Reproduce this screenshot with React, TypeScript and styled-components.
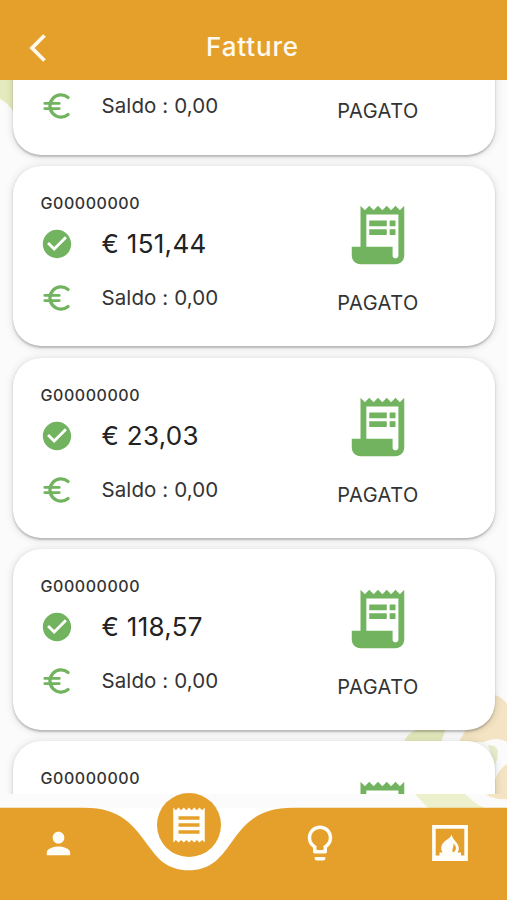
import React from 'react';
import styled, { createGlobalStyle } from 'styled-components';
import { MdCheckCircle, MdPerson, MdReceipt, MdLightbulbOutline } from 'react-icons/md';

const ORANGE = '#e5a02b';
const GREEN = '#72b35f';

const GlobalStyle = createGlobalStyle`
  * { box-sizing: border-box; }
  body { margin: 0; background: #fbfbfb; font-family: Inter, "Liberation Sans", sans-serif; color: #333; }
`;

const Screen = styled.div`
  position: relative;
  width: 507px;
  height: 900px;
  overflow: hidden;
  display: flex;
  flex-direction: column;
  background: #fbfbfb;
`;

const Backdrop = styled.svg`
  position: absolute;
  inset: 0;
  pointer-events: none;
`;

const Header = styled.header`
  position: relative;
  flex: 0 0 80px;
  display: grid;
  grid-template-columns: 76px 1fr 76px;
  align-items: center;
  padding-top: 13px;
  background: ${ORANGE};
`;

const BackButton = styled.button`
  display: flex;
  padding: 0 0 0 29px;
  margin-top: 2px;
  border: 0;
  background: none;
`;

const Title = styled.h1`
  margin: 0;
  padding-right: 2px;
  text-align: center;
  color: #fffaf0;
  font-size: 26px;
  line-height: 30px;
  font-weight: 500;
  letter-spacing: 0.85px;
`;

const List = styled.main`
  position: relative;
  flex: 0 0 714px;
  overflow: hidden;
  display: flex;
  flex-direction: column;
  justify-content: flex-start;
  gap: 11.2px;
  padding: 0 12px 0 12.5px;
`;

const Card = styled.article<{ $first?: boolean }>`
  flex: 0 0 180.6px;
  margin-top: ${(p) => (p.$first ? '-105.9px' : '0')};
  display: grid;
  grid-template-columns: 1fr 234px;
  padding-left: 28px;
  border-radius: 28px;
  background: #fff;
  box-shadow: 0 1.5px 2px rgba(0, 0, 0, 0.2), 0 1px 9px rgba(0, 0, 0, 0.15);
`;

const Details = styled.div`
  padding-top: 28px;
`;

const Code = styled.div`
  height: 18px;
  font-size: 16px;
  line-height: 18px;
  font-weight: 500;
  letter-spacing: 0.55px;
`;

const Line = styled.div<{ $height: number }>`
  display: grid;
  grid-template-columns: 61px 1fr;
  align-items: center;
  height: ${(p) => p.$height}px;
  svg { margin: 1px 0 0 -0.5px; color: ${GREEN}; }
`;

const Amount = styled.span`
  padding-top: 1px;
  font-size: 26px;
  line-height: 32px;
  letter-spacing: 0.3px;
  color: #222;
`;

const Balance = styled.span`
  padding-top: 1px;
  font-size: 20.5px;
  line-height: 26px;
  letter-spacing: 0.1px;
`;

const Status = styled.div`
  display: flex;
  flex-direction: column;
  align-items: center;
  width: 234px;
  padding-top: 34.3px;
  color: ${GREEN};
`;

const StatusText = styled.span`
  margin-top: 20px;
  font-size: 20px;
  line-height: 26px;
  letter-spacing: 0.45px;
  color: #333;
`;

const Navigation = styled.nav`
  position: absolute;
  left: 0;
  right: 0;
  bottom: 0;
  height: 108px;
  display: grid;
  grid-template-columns: 117px 143px 119px 1fr;
  color: #fffdf7;
`;

const NavShape = styled.svg`
  position: absolute;
  inset: 0;
`;

const NavItem = styled.button<{ $inset?: number }>`
  position: relative;
  display: flex;
  align-items: center;
  justify-content: center;
  height: 102px;
  padding: 0 0 0 ${(p) => p.$inset ?? 0}px;
  border: 0;
  background: none;
  color: inherit;
`;

const ActiveItem = styled(NavItem)`
  justify-self: center;
  width: 64px;
  height: 64px;
  margin-top: 0.5px;
  border-radius: 50%;
  background: ${ORANGE};
`;

const Euro = () => (
  <svg width="34" height="34" viewBox="0 0 24 24" fill="none" stroke="currentColor" strokeLinecap="round">
    <path d="M19.8 6A7.8 7.8 0 1 0 19.8 18" strokeWidth="2.3" />
    <path d="M3.4 10.2H13.6M3.4 13.8H13.6" strokeWidth="2" />
  </svg>
);

const Bill = () => (
  <svg width="70" height="70" viewBox="0 0 24 24" fill="currentColor">
    <path d="M19.5 3.5 18 2l-1.5 1.5L15 2l-1.5 1.5L12 2l-1.5 1.5L9 2 7.5 3.5 6 2v14H3v3c0 1.66 1.34 3 3 3h12c1.66 0 3-1.34 3-3V2l-1.5 1.5ZM19 19c0 .55-.45 1-1 1s-1-.45-1-1v-3H8V5h11v14Z" />
    <path d="M9 7h6v2H9zM16 7h2v2h-2zM9 10h6v2H9zM16 10h2v2h-2z" />
  </svg>
);

const Fireplace = () => (
  <svg width="36" height="36" viewBox="0 0 36 36" fill="currentColor">
    <path d="M1.9 1.9H34.1V34.1H1.9Z" fill="none" stroke="currentColor" strokeWidth="3.6" />
    <path d="M3 35V30.5H7.5V27.5H10.5C8 23 9.5 19.5 12.5 16.5C15 14 18.5 13.5 19.5 9.5C20.5 13 22 14.5 24 17C27.5 21 27.5 24.5 25.5 27.5H29V30.5H33V35Z" />
    <path d="M21.5 18.5C24.8 21.5 24.8 25 21.3 27.3C20 26.8 20.3 25 20.8 23.3C21.2 22 21.6 20.5 21.5 18.5Z" fill={ORANGE} />
  </svg>
);

const amounts = ['', '151,44', '23,03', '118,57', ''];

export default function App() {
  return (
    <>
      <GlobalStyle />
      <Screen>
        <Backdrop width="507" height="900">
          <path d="M0 80H13V111Q8 103 0 99Z" fill="#e6ebbd" />
          <path d="M507 704Q502 697 495 695L470 722L459 742H484Q498 736 507 742Z" fill="#f4e4c3" />
          <path d="M404 742Q409 728 430 728H446L441 742Z" fill="#e6ebbd" />
          <path d="M488 745Q498 745 498 752Q498 760 495 765Z" fill="#e9eccb" />
          <path d="M507 764V799Q496 800 486 795L495 792V780Q499 769 507 764Z" fill="#f4e4c3" />
          <path d="M415 794H465Q475 804 485 808H428Z" fill="#edf0cc" />
        </Backdrop>
        <Header>
          <BackButton aria-label="Indietro">
            <svg width="19" height="28" viewBox="0 0 19 28" fill="none" stroke="#fffaf0" strokeWidth="3.7">
              <path d="M15.5 1.5 3 14l12.5 12.5" />
            </svg>
          </BackButton>
          <Title>Fatture</Title>
        </Header>
        <List>
          {amounts.map((amount, i) => (
            <Card key={i} $first={i === 0}>
              <Details>
                <Code>{i > 0 && 'G00000000'}</Code>
                <Line $height={63}>
                  {amount && <><MdCheckCircle size={34} /><Amount>€ {amount}</Amount></>}
                </Line>
                <Line $height={45}>
                  {i < 4 && <><Euro /><Balance>Saldo : 0,00</Balance></>}
                </Line>
              </Details>
              <Status><Bill />{i < 4 && <StatusText>PAGATO</StatusText>}</Status>
            </Card>
          ))}
        </List>
        <Navigation>
          <NavShape width="507" height="108" viewBox="0 792 507 108">
            <path d="M84 807.7C122 807.7 134 826 150 848C158 859 168 870.3 188.7 870.3S219 859 227.4 848C243 826 255 807.7 293 807.7Z" fill="#fff" />
            <path d="M0 807.7H84C122 807.7 134 826 150 848C158 859 168 870.3 188.7 870.3S219 859 227.4 848C243 826 255 807.7 293 807.7H507V900H0Z" fill={ORANGE} />
          </NavShape>
          <NavItem aria-label="Profilo"><MdPerson size={35} /></NavItem>
          <ActiveItem aria-label="Fatture"><MdReceipt size={42} /></ActiveItem>
          <NavItem aria-label="Luce"><MdLightbulbOutline size={42} /></NavItem>
          <NavItem aria-label="Riscaldamento" $inset={13}><Fireplace /></NavItem>
        </Navigation>
      </Screen>
    </>
  );
}
